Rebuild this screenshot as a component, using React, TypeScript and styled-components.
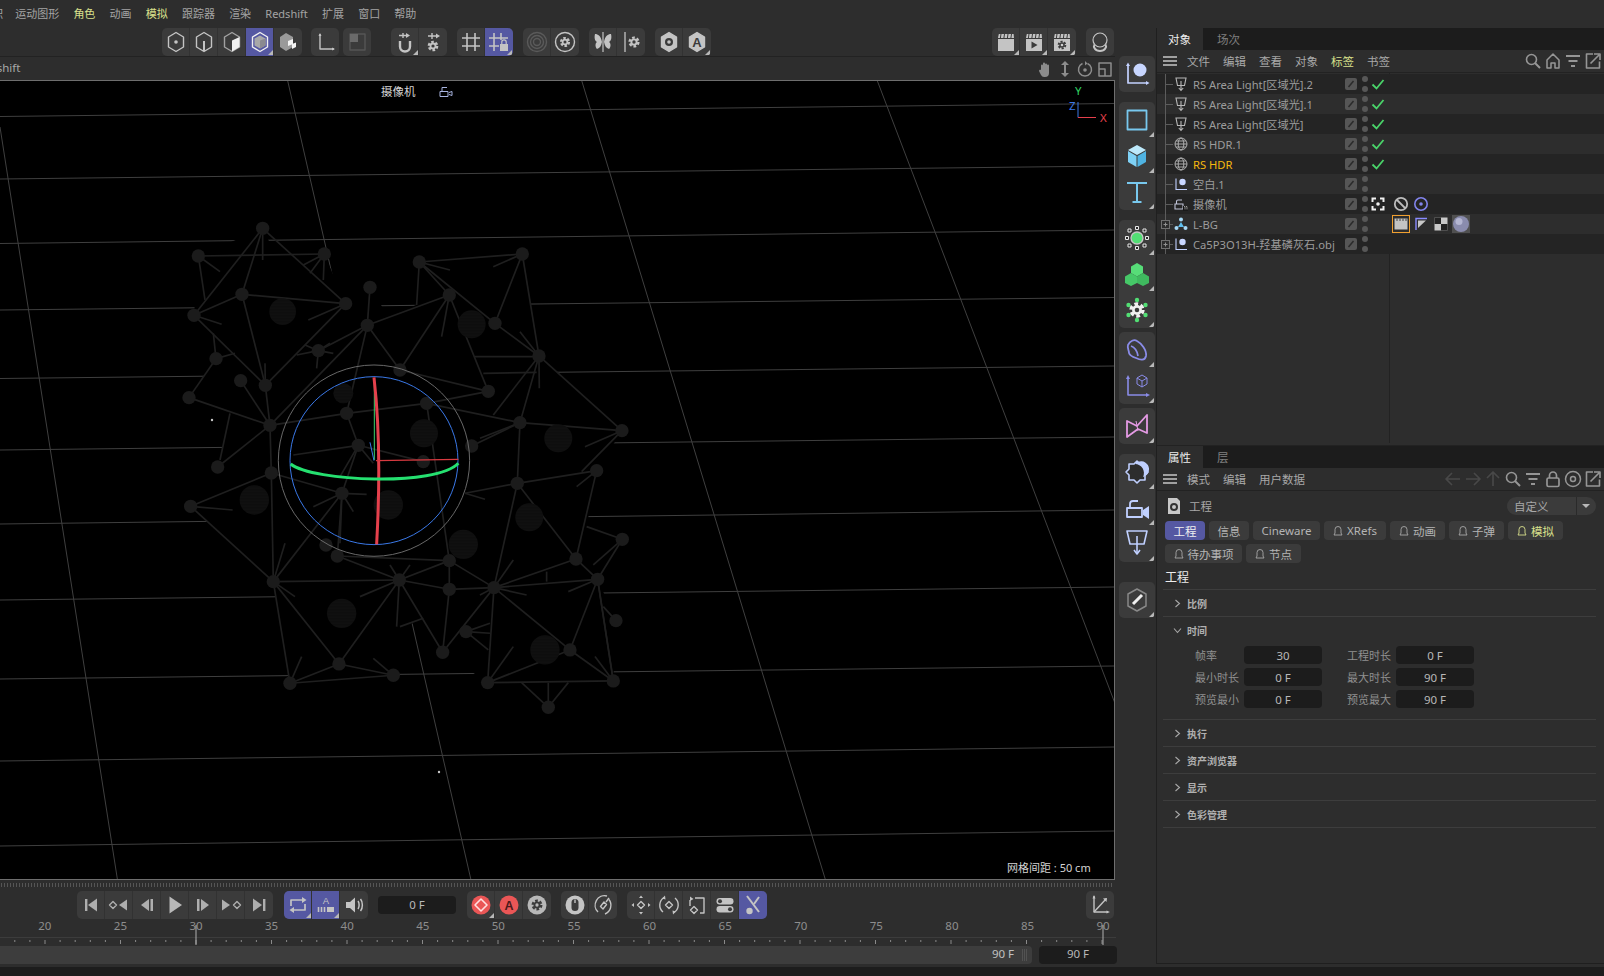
import * as React from 'react';
import styled, { createGlobalStyle } from 'styled-components';

const GlobalStyle = createGlobalStyle`
html, body {
    margin: 0;
    background: #2d2d2d;
    overflow: hidden;
}
* { box-sizing: border-box; }
`;

const Page = styled.div`
    width: 1604px;
    height: 976px;
    display: flex;
    flex-direction: column;
    background: #2d2d2d;
    color: #a8a8a8;
    font-family: "Noto Sans", "Noto Sans CJK SC", sans-serif;
    font-size: 11.5px;
    overflow: hidden;
`;

const MenuBar = styled.div`
    height: 28px;
    flex: none;
    display: flex;
    align-items: center;
    padding: 0 0 2px 16px;
    gap: 14.2px;
    font-size: 11px;
`;

const MenuItem = styled.span<{ $hot?: boolean }>`
    color: ${p => (p.$hot ? '#d9e08c' : '#a4a4a4')};
    white-space: nowrap;
`;

const ClippedItem = styled(MenuItem)`
    margin-left: -24px;
    margin-right: -2px;
`;

const Body = styled.div`
    flex: 1;
    min-height: 0;
    display: flex;
`;

const MainCol = styled.div`
    width: 1116px;
    flex: none;
    display: flex;
    flex-direction: column;
`;

const ToolRow = styled.div<{ $left: number }>`
    height: 28px;
    flex: none;
    display: flex;
    padding-left: ${p => p.$left}px;
    padding-right: 2px;
`;

const Group = styled.div<{ $gap?: number; $top?: number; $column?: boolean }>`
    display: flex;
    flex-direction: ${p => (p.$column ? 'column' : 'row')};
    margin-left: ${p => p.$gap ?? 0}px;
    margin-top: ${p => p.$top ?? 0}px;
    border-radius: 5px;
    overflow: hidden;
    flex: none;
    background: #3b3b3b;
`;

const Cell = styled.div<{ $active?: boolean; $corner?: boolean; $tone?: string; $size?: number }>`
    position: relative;
    width: ${p => p.$size ?? 28}px;
    height: ${p => p.$size ?? 28}px;
    display: flex;
    align-items: center;
    justify-content: center;
    background: ${p => (p.$active ? '#5558a2' : 'transparent')};
    color: ${p => p.$tone ?? '#c4c4c4'};
    & + & { box-shadow: -1px 0 0 #323232; }

    svg { display: block; width: 100%; height: 100%; }

    ${p => p.$corner && `
    &::after {
        content: '';
        position: absolute;
        right: 1px;
        bottom: 1px;
        border-style: solid;
        border-width: 0 0 5px 5px;
        border-color: transparent transparent #b8b8b8 transparent;
    }`}
`;

const ViewHeader = styled.div`
    height: 24px;
    flex: none;
    display: flex;
    align-items: center;
    border-top: 1px solid #222;
    margin-right: 1px;
`;

const ViewName = styled.span`
    margin-left: -24px;
    padding-bottom: 2px;
    color: #a8a8a8;
    flex: 1;
`;

const SmallIcon = styled.div`
    width: 20px;
    height: 20px;
    color: #8c8c8c;
    svg { display: block; width: 100%; height: 100%; }
`;

const Viewport = styled.div`
    position: relative;
    width: 1115px;
    height: 800px;
    flex: none;
    background: #000;
    border-top: 1px solid #6e6e6e;
    border-right: 1px solid #6e6e6e;
    border-bottom: 1px solid #6e6e6e;
    overflow: hidden;

    > svg { position: absolute; left: 0; top: -1px; width: 1114px; height: 800px; }
`;

const ViewLabel = styled.div<{ $x: number; $y: number; $color?: string; $small?: boolean }>`
    position: absolute;
    left: ${p => p.$x}px;
    top: ${p => p.$y}px;
    color: ${p => p.$color ?? '#d4d4d4'};
    font-size: ${p => (p.$small ? 11 : 11.5)}px;
    line-height: 14px;
    white-space: nowrap;
`;

const Handle = styled.div`
    height: 11px;
    flex: none;
    margin: 0 2px 0 0;
    padding-top: 3px;
    &::before {
        content: '';
        display: block;
        height: 4px;
        background-image: radial-gradient(circle, #555 0.6px, transparent 0.8px);
        background-size: 3px 2px;
    }
`;

const NumberField = styled.div<{ $w: number; $h?: number; $gap?: number }>`
    width: ${p => p.$w}px;
    height: ${p => p.$h ?? 18}px;
    flex: none;
    margin-left: ${p => p.$gap ?? 0}px;
    display: flex;
    align-items: center;
    justify-content: center;
    background: #1c1c1c;
    border-radius: 4px;
    color: #b8b8b8;
`;

const CenterField = styled(NumberField)`
    align-self: center;
    padding-bottom: 2px;
`;

const EndField = styled(NumberField)`
    padding-bottom: 4px;
`;

const Spacer = styled.div`
    flex: 1;
`;

const RulerLabels = styled.div`
    height: 18px;
    flex: none;
    display: flex;
    padding-left: 7px;
    overflow: hidden;
`;

const RulerLabel = styled.div`
    width: 75.6px;
    flex: none;
    text-align: center;
    color: #8e8e8e;
    font-size: 11.5px;
    line-height: 14px;
`;

const RulerTicks = styled.svg`
    display: block;
    width: 1116px;
    height: 9px;
    flex: none;
    overflow: visible;
`;

const RangeRow = styled.div`
    height: 18px;
    flex: none;
    display: flex;
`;

const RangeBar = styled.div`
    width: 1032px;
    flex: none;
    height: 18px;
    background: #3d3d3d;
    border-radius: 0 4px 4px 0;
    display: flex;
    align-items: center;
    justify-content: flex-end;
    padding: 0 18px 4px 0;
    color: #c0c0c0;
    position: relative;

    &::after {
        content: '';
        position: absolute;
        right: 4px;
        top: 3px;
        width: 6px;
        height: 12px;
        background: repeating-linear-gradient(90deg, #525252 0 1px, transparent 1px 2px);
    }
`;

const Strip = styled.div`
    width: 40px;
    flex: none;
    padding: 28px 1px 0 3px;
    display: flex;
    flex-direction: column;
    align-items: flex-start;
`;

const Side = styled.div`
    flex: 1;
    min-width: 0;
    height: 936px;
    display: flex;
    flex-direction: column;
    border-left: 1px solid #1f1f1f;
    border-bottom: 1px solid #1f1f1f;
`;

const StatusBar = styled.div`
    height: 9px;
    flex: none;
    background: #1d1d1d;
`;

const TabBar = styled.div`
    height: 22px;
    flex: none;
    display: flex;
    background: #1c1c1c;
`;

const Tab = styled.div<{ $on?: boolean }>`
    width: ${p => (p.$on ? '46px' : 'auto')};
    padding-left: ${p => (p.$on ? 11 : 14)}px;
    display: flex;
    align-items: center;
    background: ${p => (p.$on ? '#2d2d2d' : 'transparent')};
    color: ${p => (p.$on ? '#ececec' : '#808080')};
`;

const PanelMenu = styled.div`
    height: 23px;
    flex: none;
    display: flex;
    align-items: center;
    padding: 0 1px 0 6px;
    border-bottom: 1px solid #222;
    gap: 13px;
`;

const Burger = styled.div`
    width: 14px;
    height: 10px;
    margin-right: -3px;
    flex: none;
    border-top: 2px solid #a0a0a0;
    border-bottom: 2px solid #a0a0a0;
    position: relative;
    &::after {
        content: '';
        position: absolute;
        left: 0;
        right: 0;
        top: 2px;
        height: 2px;
        background: #a0a0a0;
    }
`;

const MenuIcons = styled.div`
    margin-left: auto;
    display: flex;
    align-items: center;
`;

const MenuIcon = styled.div<{ $dim?: boolean }>`
    width: 20px;
    height: 20px;
    color: ${p => (p.$dim ? '#484848' : '#969696')};
    svg { display: block; width: 100%; height: 100%; }
`;

const ObjectPanel = styled.div`
    height: 415px;
    flex: none;
    display: flex;
    flex-direction: column;
`;

const ObjectList = styled.div`
    flex: 1;
    display: flex;
    flex-direction: column;
    background: linear-gradient(90deg, transparent 232px, #222 232px, #222 233px, transparent 233px);
    padding-top: 1px;
`;

const Row = styled.div<{ $dark: boolean }>`
    height: 20px;
    flex: none;
    display: flex;
    background: ${p => (p.$dark ? '#242424' : '#2d2d2d')};
`;

const NameCell = styled.div`
    width: 232px;
    flex: none;
    display: flex;
    align-items: center;
`;

const TagCell = styled.div`
    flex: 1;
    display: flex;
    align-items: center;
    padding-left: 2px;
    margin-left: 1px;
    gap: 2px;
`;

const TreeGlyph = styled.svg`
    width: 16px;
    height: 20px;
    flex: none;
`;

const ObjIcon = styled.svg`
    width: 16px;
    height: 16px;
    flex: none;
    color: #b8b8b8;
`;

const ObjName = styled.span<{ $hot?: boolean }>`
    margin-left: 4px;
    font-size: 11.2px;
    color: ${p => (p.$hot ? '#f6b90f' : '#9c9c9c')};
    white-space: nowrap;
    flex: 1;
    overflow: hidden;
`;

const EditChip = styled.svg`
    width: 12px;
    height: 12px;
    flex: none;
`;

const VisDots = styled.div`
    width: 6px;
    height: 16px;
    margin-left: 5px;
    flex: none;
    display: flex;
    flex-direction: column;
    justify-content: space-between;
    &::before, &::after {
        content: '';
        width: 6px;
        height: 6px;
        border-radius: 50%;
        background: #575757;
    }
`;

const CheckSlot = styled.div`
    width: 20px;
    height: 16px;
    margin-left: 1px;
    padding-right: 2px;
    flex: none;
    display: flex;
    align-items: center;
    justify-content: center;
    svg { width: 14px; height: 14px; display: block; }
`;

const TagIcon = styled.svg<{ $framed?: boolean }>`
    width: 18px;
    height: 18px;
    flex: none;
    ${p => p.$framed && 'outline: 1px solid #f0a030; outline-offset: -1px;'}
`;

const AttrPanel = styled.div`
    flex: 1;
    display: flex;
    flex-direction: column;
    margin-top: 2px;
    border-top: 1px solid #222;
`;

const AttrHead = styled.div`
    height: 28px;
    flex: none;
    display: flex;
    align-items: center;
    padding: 2px 8px 0 9px;
`;

const DocIcon = styled.svg`
    width: 16px;
    height: 18px;
    flex: none;
`;

const AttrTitle = styled.span`
    margin-left: 7px;
`;

const PresetSelect = styled.div`
    margin-left: auto;
    width: 89px;
    height: 18px;
    border-radius: 9px;
    background: #3b3b3b;
    display: flex;
    align-items: center;
    padding-left: 7px;
    color: #a8a8a8;
    position: relative;
    &::after {
        content: '';
        position: absolute;
        right: 6px;
        top: 7px;
        border-style: solid;
        border-width: 4px 4px 0 4px;
        border-color: #b8b8b8 transparent transparent transparent;
    }
    &::before {
        content: '';
        position: absolute;
        right: 19px;
        top: 0;
        bottom: 0;
        width: 1px;
        background: #2a2a2a;
    }
`;

const PillRow = styled.div<{ $top: number }>`
    display: flex;
    gap: 4px;
    padding-left: 8px;
    margin-top: ${p => p.$top}px;
`;

const Pill = styled.div<{ $w: number; $on?: boolean; $hot?: boolean }>`
    width: ${p => p.$w}px;
    height: 19px;
    border-radius: 4px;
    flex: none;
    display: flex;
    align-items: center;
    justify-content: center;
    gap: 4px;
    background: ${p => (p.$on ? '#5558a2' : '#3b3b3b')};
    color: ${p => (p.$on ? '#f0f0f0' : p.$hot ? '#d9e08c' : '#b4b4b4')};
`;

const Bell = styled.svg`
    width: 10px;
    height: 11px;
    flex: none;
`;

const AttrHeading = styled.div`
    height: 26px;
    flex: none;
    display: flex;
    align-items: center;
    padding: 2px 0 0 8px;
    color: #ededed;
    font-size: 12px;
`;

const Section = styled.div`
    margin: 0 8px 0 6px;
    border-top: 1px solid #3d3d3d;
    &:last-of-type { border-bottom: 1px solid #3d3d3d; }
`;

const SectionHead = styled.div`
    height: 26px;
    display: flex;
    align-items: center;
    gap: 5px;
    padding-left: 10px;
    font-size: 10px;
    font-weight: 700;
    color: #b0b0b0;
`;

const Chevron = styled.svg`
    width: 9px;
    height: 9px;
    flex: none;
`;

const FieldGrid = styled.div`
    display: grid;
    grid-template-columns: 49px 78px 74px 78px;
    row-gap: 4px;
    padding: 3px 0 11px 32px;
    align-items: center;
    justify-content: start;
`;

const FieldLabel = styled.span<{ $second?: boolean }>`
    color: #909090;
    white-space: nowrap;
    font-size: 11px;
    margin-left: ${p => (p.$second ? 25 : 0)}px;
`;

const FieldValue = styled.div`
    height: 18px;
    display: flex;
    align-items: center;
    justify-content: center;
    background: #1c1c1c;
    border-radius: 4px;
    color: #b8b8b8;
    width: 78px;
`;

/* ---------- icon drawings ---------- */

const HEX = '14,4.5 21.5,9 21.5,19 14,23.5 6.5,19 6.5,9';

function Svg({ children, box = 28 }: { children: React.ReactNode; box?: number }) {
    return (
        <svg viewBox={`0 0 ${box} ${box}`} fill="none" stroke="currentColor" strokeWidth={1.4} strokeLinejoin="round">
            {children}
        </svg>
    );
}

function Gear({ x, y, r = 4, hole = '#3b3b3b', color = 'currentColor' }: { x: number; y: number; r?: number; hole?: string; color?: string }) {
    return (
        <g stroke="none">
            <circle cx={x} cy={y} r={r} fill="none" stroke={color} strokeWidth={r * 0.55} strokeDasharray={`${r * 0.62} ${r * 0.42}`} />
            <circle cx={x} cy={y} r={r * 0.82} fill={color} />
            <circle cx={x} cy={y} r={r * 0.38} fill={hole} />
        </g>
    );
}

const Clap = ({ children }: { children?: React.ReactNode }) => (
    <g>
        <path d="M6 10 L6.8 6 H21.6 L22 10 Z" fill="currentColor" stroke="none" />
        <path d="M9 6 L8.4 10 M12.5 6 L11.9 10 M16 6 L15.4 10 M19.5 6 L18.9 10" stroke="#3b3b3b" strokeWidth={1} />
        <rect x={6} y={11} width={16} height={12} fill="currentColor" stroke="none" />
        {children}
    </g>
);

const toolIcons: Record<string, React.ReactNode> = {
    hexDot: <><polygon points={HEX} /><circle cx={14} cy={14} r={1.8} fill="currentColor" stroke="none" /></>,
    hexStem: <><polygon points={HEX} /><path d="M14 23V13" strokeWidth={2} /></>,
    hexHalf: <><polygon points={HEX} opacity={0.75} /><polygon points="14,12.5 21.5,9 21.5,19 14,23.5" fill="#f0f0f0" stroke="none" /></>,
    hexCube: <><polygon points={HEX} stroke="#f0f0f0" /><polygon points="14,7.5 19.5,10.5 19.5,17.5 14,20.5 8.5,17.5 8.5,10.5" fill="#a8a8a8" stroke="none" /><polygon points="14,12.5 19.5,10.5 19.5,17.5 14,20.5" fill="#8a8a90" stroke="none" /></>,
    cubes: <><polygon points="12,5 19,9 19,19 12,23 6,19 6,9" fill="#9a9a9a" stroke="none" /><polygon points="14,13 19,11 19,16 14,18" fill="#f4f4f4" stroke="none" /><polygon points="18,16 22,14.5 22,19 18,21" fill="#f4f4f4" stroke="none" /></>,
    axis: <><path d="M9 6V21H23" /><path d="M7.5 8L9 5l1.5 3zM21 19.5l3 1.5-3 1.5z" fill="currentColor" stroke="none" /></>,
    dim: <><rect x={7} y={6} width={15} height={16} stroke="#565656" /><rect x={7} y={6} width={8} height={8} fill="#6a6a6a" stroke="none" /></>,
    magnet: <><path d="M9 13v5.5a5 5 0 0 0 10 0V13" strokeWidth={2.4} /><path d="M8 7.5h8" /><path d="M15 5l4 2.5-4 2.5z" fill="currentColor" stroke="none" /><path d="M12 5v5" /></>,
    gearArrow: <><path d="M9 8h9" /><path d="M17 5.5l4 2.5-4 2.5z" fill="currentColor" stroke="none" /><path d="M13 5v6" /><Gear x={14} y={18} r={4.2} /></>,
    grid: <path d="M10 5v18M18 5v18M5 10h18M5 18h18" strokeWidth={1.6} />,
    gridLock: <><path d="M9 5v18M16 5v7M4 10h19M4 18h10" strokeWidth={1.6} /><rect x={15} y={16} width={8} height={7} fill="currentColor" stroke="none" /><path d="M16.8 16v-2a2.2 2.2 0 0 1 4.4 0v2" strokeWidth={1.2} /></>,
    rings: <g stroke="#5a5a5a"><circle cx={14} cy={14} r={9.5} /><circle cx={14} cy={14} r={6.5} /><circle cx={14} cy={14} r={3.5} /></g>,
    gearRing: <><circle cx={14} cy={14} r={9.5} /><Gear x={14} y={14} r={4} /></>,
    wings: <><path d="M13 14C12 8 9 6 6 6c-1 4 0 7 2 8-2 1-2 5 0 7 3-1 4-3 5-7z" fill="currentColor" stroke="none" /><path d="M15 14c1-6 4-8 7-8 1 4 0 7-2 8 2 1 2 5 0 7-3-1-4-3-5-7z" stroke="none" fill="currentColor" /><path d="M14 4v20" strokeWidth={1.2} /></>,
    lineGear: <><path d="M8 4v20" strokeWidth={1.3} /><Gear x={17} y={14} r={4.4} /></>,
    hexEye: <><polygon points={HEX} fill="currentColor" /><circle cx={14} cy={14} r={4} fill="#3b3b3b" stroke="none" /><circle cx={14} cy={14} r={1.8} fill="currentColor" stroke="none" /></>,
    hexA: <><polygon points={HEX} fill="currentColor" /><text x={14} y={18.6} textAnchor="middle" fontSize={13} fontWeight={700} fill="#3b3b3b" stroke="none" fontFamily="Liberation Sans">A</text></>,
    clap: <Clap />,
    clapPlay: <Clap><path d="M11.5 13.5l6 3.5-6 3.5z" fill="#3b3b3b" stroke="none" /></Clap>,
    clapGear: <Clap><Gear x={14} y={17} r={3.4} hole="#cfcfcf" color="#3b3b3b" /></Clap>,
    sphereRing: <><circle cx={14} cy={12} r={7} strokeWidth={1.2} /><path d="M8.5 16.5C7 19 9 23 14 23s7-4 5.500-6.500" strokeWidth={2} /></>,
    first: <><rect x={8} y={8} width={2.4} height={12} fill="currentColor" stroke="none" /><path d="M20 7.500v13l-9-6.500z" fill="currentColor" stroke="none" /></>,
    prevKey: <><path d="M4.500 14l3.500-3.500 3.500 3.500-3.500 3.500z" /><path d="M22 8.500v11l-8-5.500z" fill="currentColor" stroke="none" /></>,
    prevFrame: <><path d="M16 8v12l-8-6z" fill="currentColor" stroke="none" /><rect x={17.500} y={8} width={2.500} height={12} fill="currentColor" stroke="none" /></>,
    play: <path d="M8.500 5.500v17L21 14z" fill="currentColor" stroke="none" />,
    nextFrame: <><rect x={8} y={8} width={2.500} height={12} fill="currentColor" stroke="none" /><path d="M12 8v12l8-6z" fill="currentColor" stroke="none" /></>,
    nextKey: <><path d="M5 8.500v11l8-5.500z" fill="currentColor" stroke="none" /><path d="M16.500 14l3.500-3.500 3.500 3.500-3.500 3.500z" /></>,
    last: <><path d="M8 7.500v13l9-6.500z" fill="currentColor" stroke="none" /><rect x={18} y={8} width={2.400} height={12} fill="currentColor" stroke="none" /></>,
    loop: <><path d="M7 15v-6h13" strokeWidth={1.7} /><path d="M18 6l4.500 3-4.500 3z" fill="currentColor" stroke="none" /><path d="M21 13v6H8" strokeWidth={1.7} /><path d="M10 16l-4.500 3 4.500 3z" fill="currentColor" stroke="none" /></>,
    autoBars: <><text x={14} y={12.500} textAnchor="middle" fontSize={9.500} fill="currentColor" stroke="none" fontFamily="Liberation Sans">A</text><path d="M6.500 16v5M9.500 16v5M12.500 16v5" strokeWidth={1.6} /><rect x={15} y={16} width={7} height={5} fill="currentColor" stroke="none" /></>,
    speaker: <><path d="M6 11h4l5-4.500v15L10 17H6z" fill="currentColor" stroke="none" /><path d="M18 10c1.500 2 1.500 6 0 8M20.500 8c2.500 3 2.500 9 0 12" strokeWidth={1.500} /></>,
    keyRed: <><circle cx={14} cy={14} r={9.500} fill="#ea5656" stroke="none" /><path d="M14 8l6 6-6 6-6-6z" stroke="#ffdede" strokeWidth={1.600} /></>,
    autoRed: <><circle cx={14} cy={14} r={9.500} fill="#ea5656" stroke="none" /><text x={14} y={18.500} textAnchor="middle" fontSize={12.500} fontWeight={700} fill="#4a1a1a" stroke="none" fontFamily="Liberation Sans">A</text></>,
    gearDisc: <><circle cx={14} cy={14} r={9.500} fill="#b8b8b8" stroke="none" /><Gear x={14} y={14} r={4.300} color="#3b3b3b" hole="#b8b8b8" /></>,
    mouseDisc: <><circle cx={14} cy={14} r={9.500} fill="#c4c4c4" stroke="none" /><rect x={10.500} y={8} width={7} height={12} rx={3.500} fill="#3b3b3b" stroke="none" /><path d="M14 8.500v3.500" stroke="#c4c4c4" /></>,
    gauge: <><path d="M9 21a9.500 9.500 0 0 1 9-16M20 8.500A9.500 9.500 0 0 1 16 23" /><path d="M15 11l2.500 2.500L14 18l-2.500-2.500z" /><path d="M17 11l3-4" /></>,
    moveKey: <><path d="M14 10.500l3.500 3.500-3.500 3.500-3.500-3.500z" /><path d="M14 4.500l2 2.500h-4zM14 23.500L12 21h4zM4.500 14L7 12v4zM23.500 14L21 16v-4z" fill="currentColor" stroke="none" /></>,
    rotateKey: <><path d="M14 10.500l3.500 3.500-3.500 3.500-3.500-3.500z" /><path d="M8 21a9 9 0 0 1 1-14.500M20 7a9 9 0 0 1-1 14.500" /><path d="M10 4.500l.5 4-3.500-1zM18 23.500l-.5-4 3.500 1z" fill="currentColor" stroke="none" /></>,
    scaleKey: <><path d="M12 7h9v15h-4" /><path d="M7 15V9" /><path d="M11 15.500l3.500 3.500-3.500 3.500L7.500 19z" /><path d="M7 5.500l3.500 2.500L7 10z" fill="currentColor" stroke="none" /></>,
    toggles: <><rect x={5.500} y={7} width={17} height={6.500} rx={3.250} fill="currentColor" stroke="none" /><rect x={5.500} y={15} width={17} height={6.500} rx={3.250} fill="currentColor" stroke="none" /><circle cx={9} cy={10.250} r={2} fill="#3b3b3b" stroke="none" /><circle cx={19} cy={18.250} r={2} fill="#3b3b3b" stroke="none" /></>,
    cutKey: <><path d="M8 5l12 16" strokeWidth={2} /><path d="M20 6L15 13" strokeWidth={2} /><circle cx={10.500} cy={20} r={3.200} fill="currentColor" stroke="none" /></>,
    param: <><path d="M8 5v16h14" /><path d="M8 21L20 8" /><path d="M6.500 7.500L8 4l1.500 3.500zM20.500 19.500L24 21l-3.500 1.500zM17 7.500L21 7l-.5 4z" fill="currentColor" stroke="none" /></>,
};

const stripIcons: Record<string, React.ReactNode> = {
    nullObj: <g stroke="#c4d2ff" strokeWidth={1.700}><path d="M9 8v19h20" /><path d="M7 10l2-3.500 2 3.500zM27 25l3.500 2-3.500 2z" fill="#c4d2ff" stroke="none" /><circle cx={21} cy={14} r={6.500} fill="#c8d6ff" stroke="none" /></g>,
    rect: <rect x={8.500} y={8.500} width={19} height={19} stroke="#78c8ee" strokeWidth={1.800} />,
    cube: <g stroke="none"><polygon points="18,7 27,12 18,17 9,12" fill="#bde9fb" /><polygon points="9,13 17.500,18 17.500,29 9,24" fill="#7fd2f6" /><polygon points="27,13 18.500,18 18.500,29 27,24" fill="#4fb3e2" /></g>,
    text: <path d="M8 9h20M18 9v19M13.500 28h9" stroke="#78c8ee" strokeWidth={2} />,
    nodeGreen: <g><circle cx={18} cy={18} r={6} fill="#52df74" /><g fill="#2a2a2a" stroke="#e8e8e8" strokeWidth={1}><rect x={16.500} y={6.500} width={3} height={3} /><rect x={16.500} y={26.500} width={3} height={3} /><rect x={6.500} y={16.500} width={3} height={3} /><rect x={26.500} y={16.500} width={3} height={3} /><rect x={9} y={9} width={3} height={3} /><rect x={24} y={9} width={3} height={3} /><rect x={9} y={24} width={3} height={3} /><rect x={24} y={24} width={3} height={3} /></g></g>,
    cubesGreen: <g stroke="none"><polygon points="18,7 24,10.500 24,17 18,20.500 12,17 12,10.500" fill="#57dd78" /><polygon points="12,17 18,20.500 18,27 12,30 6,27 6,20.500" fill="#46c868" /><polygon points="24,17 30,20.500 30,27 24,30 18,27 18,20.500" fill="#3fb95f" /></g>,
    gearGreen: <g><g fill="#52df74" stroke="none"><circle cx={18} cy={8} r={2.200} /><circle cx={18} cy={28} r={2.200} /><circle cx={9.500} cy={13} r={2.200} /><circle cx={26.500} cy={13} r={2.200} /><circle cx={9.500} cy={23} r={2.200} /><circle cx={26.500} cy={23} r={2.200} /></g><Gear x={18} y={18} r={6} color="#f0f0f0" /></g>,
    spline: <path d="M9 13c2-4 6-6 9-4 4 2 10 9 9 15-1 5-6 4-10 2-3-1-6-2-7-5 0-3-2-5-1-8zM12 14c3 1 6 4 7 10" stroke="#8a8ce8" strokeWidth={1.800} />,
    axisCube: <g stroke="#8a8ce8" strokeWidth={1.600}><path d="M9 9v18h20" /><path d="M7 11l2-4 2 4zM27 25l4 2-4 2z" fill="#8a8ce8" stroke="none" /><path d="M23 7l5 3v6l-5 3-5-3v-6zM18 10l5 3 5-3M23 13v6" strokeWidth={1} /></g>,
    bow: <g stroke="#e49ae4" strokeWidth={1.800}><path d="M8 13l10 5 10-11v18l-9-4-11 8z" /><path d="M17 13l2 10" strokeWidth={1} /></g>,
    moon: <g><path d="M18 7l3 3h5v5l3 3-3 3v5h-5l-3 3-3-3h-5v-5l-3-3 3-3v-5h5z" stroke="#c0d0ff" strokeWidth={1.600} fill="#2d2d2d" /><path d="M16 10a8 8 0 1 1 8 13 9 9 0 0 0-8-13z" fill="#c0d0ff" stroke="none" /></g>,
    camera: <g stroke="#c0d0ff" strokeWidth={1.800}><path d="M8 27v-9h15v9zM11 18v-4a3 3 0 0 1 3-3h5" /><path d="M24 20l6-4v13l-6-4z" fill="#c0d0ff" stroke="none" /></g>,
    lamp: <g stroke="#c0d0ff" strokeWidth={1.600}><path d="M8 5h20l-3 13H11zM18 10v17" /><path d="M15 24l3 4 3-4" /></g>,
    pen: <g><polygon points="18,7 27,12 27,24 18,29 9,24 9,12" stroke="#888" strokeWidth={1.500} /><path d="M14 22l9-9" stroke="#f0f0f0" strokeWidth={3} /></g>,
};

const searchIcon = <Svg box={20}><circle cx={8.500} cy={8.500} r={5} strokeWidth={1.600} /><path d="M12 12l5 5" strokeWidth={2} /></Svg>;
const externalIcon = <Svg box={20}><path d="M10 3H3.500v14h13v-6.500" strokeWidth={1.600} /><path d="M7.500 12.500L16 4M11 3h6v6" strokeWidth={1.600} /></Svg>;
const filterIcon = <Svg box={20}><path d="M3 5h14M5.500 10h9M8 15h4" strokeWidth={2} /></Svg>;

function Tool({ n, active, corner, tone, size, box }: { n: string; active?: boolean; corner?: boolean; tone?: string; size?: number; box?: number }) {
    return (
        <Cell $active={active} $corner={corner} $tone={tone} $size={size}>
            <Svg box={box}>{box === 36 ? stripIcons[n] : toolIcons[n]}</Svg>
        </Cell>
    );
}

function Ico({ kind }: { kind: string }) {
    if (kind === 'light') {
        return (
            <ObjIcon viewBox="0 0 16 16" fill="none" stroke="currentColor" strokeWidth={1.100}>
                <path d="M3 2h10l-1.500 7.500h-7zM8 5v9M5.800 12L8 14.500 10.200 12" />
            </ObjIcon>
        );
    }
    if (kind === 'globe') {
        return (
            <ObjIcon viewBox="0 0 16 16" fill="none" stroke="currentColor" strokeWidth={0.900}>
                <circle cx={8} cy={8} r={6} />
                <ellipse cx={8} cy={8} rx={2.800} ry={6} />
                <path d="M2 8h12M3 5h10M3 11h10" />
            </ObjIcon>
        );
    }
    if (kind === 'null') {
        return (
            <ObjIcon viewBox="0 0 16 16" fill="none" stroke="#c0d0ff" strokeWidth={1.100}>
                <path d="M3 2.500V13.500H14" />
                <circle cx={9.500} cy={6} r={3.200} fill="#c8d6ff" stroke="none" />
            </ObjIcon>
        );
    }
    if (kind === 'camera') {
        return (
            <ObjIcon viewBox="0 0 16 16" fill="none" stroke="#c0c4d8" strokeWidth={1.100}>
                <path d="M2 13V8h8v5zM3.500 8V5.500a1.500 1.500 0 0 1 1.500-1.500h4" />
                <rect x={10} y={10} width={5} height={4.500} fill="#111" stroke="none" />
                <path d="M11 10.500h1v3M13 10.500h1v3" stroke="#ccc" strokeWidth={0.700} />
            </ObjIcon>
        );
    }
    return (
        <ObjIcon viewBox="0 0 16 16" stroke="none">
            <circle cx={8} cy={3.500} r={2} fill="#a8d8f5" />
            <polygon points="8,6 11,11 5,11" fill="#5fc0f0" />
            <circle cx={3.500} cy={12} r={2} fill="#a8d8f5" />
            <circle cx={12.500} cy={12} r={2} fill="#a8d8f5" />
        </ObjIcon>
    );
}

function Tree({ plus }: { plus?: boolean }) {
    return (
        <TreeGlyph viewBox="0 0 16 20" fill="none" stroke="#5c5c5c" strokeWidth={1}>
            <path d="M8.500 0V20" />
            <path d="M8.500 10.500H16" />
            {plus && (
                <g>
                    <rect x={4.500} y={6.500} width={8} height={8} fill="#2d2d2d" stroke="#707070" />
                    <path d="M6.500 10.500h4M8.500 8.500v4" stroke="#909090" />
                </g>
            )}
        </TreeGlyph>
    );
}

const ChevronIcon = ({ open }: { open?: boolean }) => (
    <Chevron viewBox="0 0 9 9" fill="none" stroke="#a8a8a8" strokeWidth={1.100}>
        <path d={open ? 'M1 2.500l3.500 4 3.500-4' : 'M2.500 1l4 3.500-4 3.500'} />
    </Chevron>
);

const BellIcon = ({ color = '#a8a8a8' }: { color?: string }) => (
    <Bell viewBox="0 0 10 11" fill="none" stroke={color} strokeWidth={0.900}>
        <path d="M1 10h8L8 8V4.500a3 3 0 0 0-6 0V8z" />
    </Bell>
);

/* ---------- data ---------- */

const menus = ['运动图形', '角色', '动画', '模拟', '跟踪器', '渲染', 'Redshift', '扩展', '窗口', '帮助'];

const objects = [
    { icon: 'light', name: 'RS Area Light[区域光].2', check: true },
    { icon: 'light', name: 'RS Area Light[区域光].1', check: true },
    { icon: 'light', name: 'RS Area Light[区域光]', check: true },
    { icon: 'globe', name: 'RS HDR.1', check: true },
    { icon: 'globe', name: 'RS HDR', check: true, hot: true },
    { icon: 'null', name: '空白.1' },
    { icon: 'camera', name: '摄像机', focus: true, tags: 'camera' },
    { icon: 'lbg', name: 'L-BG', plus: true, tags: 'bg' },
    { icon: 'null', name: 'Ca5P3O13H-羟基磷灰石.obj', plus: true },
];

/* traced off the viewport: grid in screen px, molecule in a 3x space around (170,210) */
const gridLines = [
    [0, 116.5, 1114, 103.5], [0, 179, 1114, 166], [0, 243.5, 1114, 230], [0, 310, 1114, 297.5],
    [0, 378.5, 1114, 366], [0, 450, 1114, 437], [0, 524, 1114, 510], [0, 600, 1114, 587],
    [0, 679, 1114, 666], [0, 761, 1114, 747], [0, 846, 1114, 831],
    [0, 127, 117.5, 880], [287.5, 80, 471, 880], [581.5, 80, 825.5, 880], [877, 80, 1116, 706],
];

const hull = '278,55 300,100 440,100 463,132 527,281 600,232 655,320 738,285 748,156 1057,132 1107,438 1356,662 1280,782 1250,950 1357,988 1283,1108 1338,1232 1330,1413 953,1418 818,1327 730,1240 690,1250 670,1396 360,1420 310,1115 62,889 143,771 180,610 57,563 138,446 72,316 85,138';

const nodes: Record<string, [number, number]> = {
    a: [278, 55], b: [85, 138], c: [463, 132], d: [216, 253], e: [527, 281], f: [72, 316], g: [138, 446], h: [212, 512],
    i: [286, 526], j: [57, 563], k: [300, 646], l: [143, 771], m: [304, 789], n: [62, 889], o: [310, 1115], p: [360, 1420],
    q: [507, 1362], r: [670, 1396], s: [600, 232], t: [592, 346], u: [445, 422], v: [530, 610], w: [565, 706], x: [516, 850],
    y: [748, 156], z: [838, 255], A: [1057, 132], B: [975, 340], C: [1107, 438], D: [955, 544], E: [770, 580], F: [905, 708],
    G: [760, 755], H: [690, 480], I: [1050, 638], J: [1356, 662], K: [1042, 820], L: [1280, 782], M: [1357, 988], N: [1218, 1047],
    O: [1283, 1108], P: [972, 1133], Q: [838, 1052], R: [838, 1138], S: [688, 1110], T: [818, 1327], U: [888, 1265], V: [953, 1418],
    W: [1200, 1320], X: [1330, 1413], Y: [1338, 1232], Z: [1135, 1492], aa: [468, 1005], ab: [502, 1038],
};

const bonds = 'a-f a-e a-d b-c d-e d-f d-i f-i e-i g-j h-k i-k j-k k-v k-t k-l k-m m-n m-o m-x n-o o-p o-q o-S o-x p-q p-r q-r q-S s-t t-u t-v t-z t-H v-w v-E x-w x-ab y-A y-B A-B A-C B-C C-I C-J H-D z-H z-D y-z D-E E-I E-Q I-J I-K K-L K-N K-P L-N M-O N-P N-O O-W O-X O-P P-Q P-V P-W P-T P-R Q-S Q-R Q-ab R-S R-T S-T S-ab V-W V-X W-X X-O I-F w-G'.split(' ');

const stubs = [
    [278, 55, 278, 150], [85, 138, 105, 270], [85, 138, 150, 185], [463, 132, 420, 190], [463, 132, 460, 210], [463, 132, 400, 165],
    [527, 281, 415, 330], [72, 316, 155, 343], [138, 446, 130, 370], [138, 446, 195, 430], [286, 526, 285, 460], [180, 610, 150, 750],
    [62, 889, 188, 900], [310, 1115, 345, 1000], [310, 1115, 375, 1160], [360, 1420, 395, 1340], [670, 1396, 610, 1345],
    [445, 422, 380, 435], [445, 422, 490, 430], [445, 422, 440, 475], [445, 422, 405, 405], [445, 422, 480, 400],
    [565, 706, 370, 735], [565, 706, 510, 800], [565, 706, 610, 760], [516, 850, 590, 853], [516, 850, 430, 890], [516, 850, 550, 905], [516, 850, 510, 1000],
    [748, 156, 840, 180], [748, 156, 740, 285], [838, 255, 815, 380], [1057, 132, 970, 170], [1107, 438, 1108, 535], [1107, 438, 1050, 365],
    [1107, 438, 970, 615], [915, 440, 1090, 440], [940, 490, 1100, 487], [1050, 638, 930, 685], [1356, 662, 1245, 710], [1356, 662, 1235, 785],
    [1042, 820, 885, 850], [885, 850, 945, 868], [1280, 782, 1220, 830], [1357, 988, 1250, 950], [1357, 988, 1270, 1065], [1283, 1108, 1195, 1145],
    [972, 1133, 1030, 1050], [972, 1133, 930, 1155], [972, 1133, 1070, 1155], [688, 1110, 680, 1250], [688, 1110, 570, 1160], [688, 1110, 720, 1065],
    [688, 1110, 660, 1065], [888, 1265, 960, 1240], [888, 1265, 960, 1270], [888, 1265, 955, 1320], [953, 1418, 1030, 1310], [1330, 1413, 1275, 1340],
    [1135, 1492, 1055, 1418], [1135, 1492, 1195, 1418], [1135, 1492, 1135, 1418], [1338, 1232, 1300, 1190], [690, 1250, 760, 1225], [1130, 1085, 1130, 1115],
];

const balls = [
    [338, 305, 40], [905, 343, 42], [762, 670, 42], [1165, 685, 42], [253, 870, 44], [655, 885, 44],
    [880, 1003, 44], [1078, 922, 42], [515, 1210, 44], [1125, 1320, 44], [520, 550, 30],
];

function Molecule() {
    return (
        <g transform="translate(170 130) scale(0.3333)">
            <defs>
                <pattern id="ballDots" width={4.5} height={4.5} patternUnits="userSpaceOnUse">
                    <rect width={4.5} height={4.5} fill="#0a0a0a" />
                    <circle cx={2.250} cy={2.250} r={1.400} fill="#1d1d1d" />
                </pattern>
            </defs>
            <polygon points={hull} fill="#000" />
            <g stroke="#1f1f1f" strokeWidth={5}>
                {bonds.map(b => {
                    const [p1, p2] = b.split('-');
                    const s = nodes[p1];
                    const t = nodes[p2];
                    return <line key={b} x1={s[0]} y1={s[1]} x2={t[0]} y2={t[1]} />;
                })}
                {stubs.map((s, i) => <line key={i} x1={s[0]} y1={s[1]} x2={s[2]} y2={s[3]} />)}
            </g>
            {balls.map((b, i) => <circle key={i} cx={b[0]} cy={b[1]} r={b[2]} fill="url(#ballDots)" />)}
            {Object.entries(nodes).map(([k, v]) => <circle key={k} cx={v[0]} cy={v[1]} r={20} fill="#1b1b1b" />)}
            <circle cx={612} cy={752} r={287} fill="none" stroke="#686868" strokeWidth={3} />
            <circle cx={612} cy={752} r={252} fill="none" stroke="#3a78e8" strokeWidth={3} />
            <line x1={613} y1={505} x2={613} y2={750} stroke="#3ad66c" strokeWidth={3} />
            <path d="M600 697L612 752" stroke="#3a78e8" strokeWidth={3} fill="none" />
            <path d="M612 502C628 640 630 820 620 1003" fill="none" stroke="#e5404c" strokeWidth={9} />
            <path d="M618 752L865 748" stroke="#d83a40" strokeWidth={4} />
            <path d="M362 762C430 815 800 830 865 760" fill="none" stroke="#25e070" strokeWidth={9} />
        </g>
    );
}

function Scene() {
    return (
        <svg viewBox="0 80 1114 800" fill="none">
            <g stroke="#3f3f3f" strokeWidth={1}>
                {gridLines.map((l, i) => <line key={i} x1={l[0]} y1={l[1]} x2={l[2]} y2={l[3]} />)}
            </g>
            <g transform="translate(0 80)">
                <Molecule />
            </g>
            <circle cx={212} cy={420} r={1.200} fill="#c8c8c8" />
            <circle cx={439} cy={772} r={1.200} fill="#c8c8c8" />
            <path d="M1078 117.500V102" stroke="#3a78e8" />
            <path d="M1078 117.500H1096" stroke="#e5404c" />
            <path d="M447 87.500h-5v3.500M440 96.500v-5h8v5zM449 92.500l3-1v4l-3-1" stroke="#a8b4e0" strokeWidth={1} />
        </svg>
    );
}

function Ruler() {
    const ticks = [];
    for (let f = 17; f <= 93; f++) {
        const x = 45 + (f - 20) * 15.1;
        if (x < 0 || x > 1112) continue;
        ticks.push(<line key={f} x1={x} x2={x} y1={3} y2={f % 5 === 0 ? 7 : 5} stroke="#8a8a8a" />);
    }
    return (
        <RulerTicks viewBox="0 0 1116 9">
            <line x1={0} x2={1116} y1={0.5} y2={0.5} stroke="#3c3c3c" />
            {ticks}
            <line x1={196} x2={196} y1={-12} y2={8} stroke="#b0b0b0" />
            <line x1={1103} x2={1103} y1={-12} y2={8} stroke="#b0b0b0" />
        </RulerTicks>
    );
}

export default function App() {
    return (
        <Page>
            <GlobalStyle />
            <MenuBar>
                <ClippedItem>积</ClippedItem>
                {menus.map(m => (
                    <MenuItem key={m} $hot={m === '角色' || m === '模拟'}>{m}</MenuItem>
                ))}
            </MenuBar>
            <Body>
                <MainCol>
                    <ToolRow $left={162}>
                        <Group>
                            <Tool n="hexDot" />
                            <Tool n="hexStem" />
                            <Tool n="hexHalf" />
                            <Tool n="hexCube" active corner />
                            <Tool n="cubes" />
                        </Group>
                        <Group $gap={9}><Tool n="axis" /></Group>
                        <Group $gap={4}><Tool n="dim" /></Group>
                        <Group $gap={20}>
                            <Tool n="magnet" corner />
                            <Tool n="gearArrow" />
                        </Group>
                        <Group $gap={10}>
                            <Tool n="grid" />
                            <Tool n="gridLock" active corner />
                        </Group>
                        <Group $gap={10}>
                            <Tool n="rings" />
                            <Tool n="gearRing" />
                        </Group>
                        <Group $gap={10}>
                            <Tool n="wings" />
                            <Tool n="lineGear" />
                        </Group>
                        <Group $gap={10}>
                            <Tool n="hexEye" />
                            <Tool n="hexA" corner />
                        </Group>
                        <Spacer />
                        <Group>
                            <Tool n="clap" corner />
                            <Tool n="clapPlay" corner />
                            <Tool n="clapGear" corner />
                        </Group>
                        <Group $gap={10}><Tool n="sphereRing" /></Group>
                    </ToolRow>
                    <ViewHeader>
                        <ViewName>Redshift</ViewName>
                        <SmallIcon>
                            <Svg box={20}><path d="M6 10V6.500a1 1 0 0 1 2 0V4.500a1 1 0 0 1 2 0v1a1 1 0 0 1 2 0v1a1 1 0 0 1 2 0V14a4 4 0 0 1-4 4H9a4 4 0 0 1-3-2l-2-4c0-1.500 1.500-1.500 2-1z" fill="currentColor" stroke="none" /></Svg>
                        </SmallIcon>
                        <SmallIcon>
                            <Svg box={20}><path d="M10 2l4 4h-3v8h3l-4 4-4-4h3V6H6z" fill="currentColor" stroke="none" /></Svg>
                        </SmallIcon>
                        <SmallIcon>
                            <Svg box={20}><path d="M12.500 4.500a6.500 6.500 0 1 1-5 0" strokeWidth={1.500} /><circle cx={10} cy={11} r={1.800} fill="currentColor" stroke="none" /><path d="M10 2l2.500 2.500L10 6.500z" fill="currentColor" stroke="none" /></Svg>
                        </SmallIcon>
                        <SmallIcon>
                            <Svg box={20}><rect x={4} y={4} width={12} height={13} strokeWidth={1.500} /><path d="M4 10h6v7" strokeWidth={1.500} /></Svg>
                        </SmallIcon>
                    </ViewHeader>
                    <Viewport>
                        <Scene />
                        <ViewLabel $x={381} $y={4}>摄像机</ViewLabel>
                        <ViewLabel $x={1075} $y={3} $color="#2fd060">Y</ViewLabel>
                        <ViewLabel $x={1069} $y={18} $color="#3a78e8">Z</ViewLabel>
                        <ViewLabel $x={1100} $y={30} $color="#e5404c">X</ViewLabel>
                        <ViewLabel $x={1007} $y={780} $small>网格间距 : 50 cm</ViewLabel>
                    </Viewport>
                    <Handle />
                    <ToolRow $left={77}>
                        <Group>
                            <Tool n="first" tone="#aeaeae" />
                            <Tool n="prevKey" tone="#aeaeae" />
                            <Tool n="prevFrame" tone="#aeaeae" />
                            <Tool n="play" tone="#b8b8b8" />
                            <Tool n="nextFrame" tone="#aeaeae" />
                            <Tool n="nextKey" tone="#aeaeae" />
                            <Tool n="last" tone="#aeaeae" />
                        </Group>
                        <Group $gap={11}>
                            <Tool n="loop" active corner />
                            <Tool n="autoBars" active corner />
                            <Tool n="speaker" />
                        </Group>
                        <CenterField $w={78} $gap={10}>0 F</CenterField>
                        <Group $gap={11}>
                            <Tool n="keyRed" corner />
                            <Tool n="autoRed" />
                            <Tool n="gearDisc" />
                        </Group>
                        <Group $gap={10}>
                            <Tool n="mouseDisc" />
                            <Tool n="gauge" />
                        </Group>
                        <Group $gap={10}>
                            <Tool n="moveKey" />
                            <Tool n="rotateKey" />
                            <Tool n="scaleKey" />
                            <Tool n="toggles" />
                            <Tool n="cutKey" active />
                        </Group>
                        <Spacer />
                        <Group><Tool n="param" /></Group>
                    </ToolRow>
                    <RulerLabels>
                        {[20, 25, 30, 35, 40, 45, 50, 55, 60, 65, 70, 75, 80, 85, 90].map(n => (
                            <RulerLabel key={n}>{n}</RulerLabel>
                        ))}
                    </RulerLabels>
                    <Ruler />
                    <RangeRow>
                        <RangeBar>90 F</RangeBar>
                        <EndField $w={78} $gap={7}>90 F</EndField>
                    </RangeRow>
                </MainCol>
                <Strip>
                    <Group><Tool n="nullObj" size={36} box={36} /></Group>
                    <Group $column $top={10}>
                        <Tool n="rect" size={36} box={36} corner />
                        <Tool n="cube" size={36} box={36} corner />
                        <Tool n="text" size={36} box={36} corner />
                    </Group>
                    <Group $column $top={10}>
                        <Tool n="nodeGreen" size={36} box={36} corner />
                        <Tool n="cubesGreen" size={36} box={36} corner />
                        <Tool n="gearGreen" size={36} box={36} corner />
                    </Group>
                    <Group $column $top={4}>
                        <Tool n="spline" size={36} box={36} corner />
                        <Tool n="axisCube" size={36} box={36} corner />
                    </Group>
                    <Group $top={4}><Tool n="bow" size={36} box={36} corner /></Group>
                    <Group $column $top={10}>
                        <Tool n="moon" size={36} box={36} corner />
                        <Tool n="camera" size={36} box={36} corner />
                        <Tool n="lamp" size={36} box={36} corner />
                    </Group>
                    <Group $top={20}><Tool n="pen" size={36} box={36} corner /></Group>
                </Strip>
                <Side>
                    <ObjectPanel>
                        <TabBar>
                            <Tab $on>对象</Tab>
                            <Tab>场次</Tab>
                        </TabBar>
                        <PanelMenu>
                            <Burger />
                            <span>文件</span>
                            <span>编辑</span>
                            <span>查看</span>
                            <span>对象</span>
                            <MenuItem $hot>标签</MenuItem>
                            <span>书签</span>
                            <MenuIcons>
                                <MenuIcon>{searchIcon}</MenuIcon>
                                <MenuIcon><Svg box={20}><path d="M4 17V9l6-6 6 6v8h-4v-5H8v5z" strokeWidth={1.500} /></Svg></MenuIcon>
                                <MenuIcon>{filterIcon}</MenuIcon>
                                <MenuIcon>{externalIcon}</MenuIcon>
                            </MenuIcons>
                        </PanelMenu>
                        <ObjectList>
                            {objects.map((o, i) => (
                                <Row key={o.name} $dark={i % 2 === 0}>
                                    <NameCell>
                                        <Tree plus={o.plus} />
                                        <Ico kind={o.icon} />
                                        <ObjName $hot={o.hot}>{o.name}</ObjName>
                                        <EditChip viewBox="0 0 12 12">
                                            <rect width={12} height={12} rx={2} fill="#565656" />
                                            <path d="M3.500 9L8.500 3" stroke="#2a2a2a" strokeWidth={1.500} />
                                        </EditChip>
                                        <VisDots />
                                        <CheckSlot>
                                            {o.check && (
                                                <svg viewBox="0 0 14 14" fill="none" stroke="#4ad46a" strokeWidth={1.800}>
                                                    <path d="M1.500 7.500L5.500 11.500L12.500 3" />
                                                </svg>
                                            )}
                                            {o.focus && (
                                                <svg viewBox="0 0 14 14" fill="none" stroke="#f0f0f0" strokeWidth={2}>
                                                    <path d="M1.500 5V1.500H5M9 1.500h3.500V5M12.500 9v3.500H9M5 12.500H1.500V9" />
                                                    <circle cx={7} cy={7} r={1.800} fill="#f0f0f0" stroke="none" />
                                                </svg>
                                            )}
                                        </CheckSlot>
                                    </NameCell>
                                    <TagCell>
                                        {o.tags === 'camera' && (
                                            <>
                                                <TagIcon viewBox="0 0 18 18" fill="none" stroke="#bcbcbc" strokeWidth={1.800}>
                                                    <circle cx={9} cy={9} r={6.200} />
                                                    <path d="M4.500 4.500l9 9" />
                                                </TagIcon>
                                                <TagIcon viewBox="0 0 18 18" fill="none" stroke="#8284ec" strokeWidth={1.600}>
                                                    <circle cx={9} cy={9} r={6.200} />
                                                    <circle cx={9} cy={9} r={1.800} fill="#8284ec" stroke="none" />
                                                </TagIcon>
                                            </>
                                        )}
                                        {o.tags === 'bg' && (
                                            <>
                                                <TagIcon $framed viewBox="0 0 18 18">
                                                    <rect x={2.500} y={3.500} width={13} height={11} fill="#c4c4c4" />
                                                    <path d="M5 3.500V6M8 3.500V6M11 3.500V6M14 3.500V6" stroke="#444" strokeWidth={1} />
                                                </TagIcon>
                                                <TagIcon viewBox="0 0 18 18" fill="none">
                                                    <path d="M4 15V3.500H15" stroke="#8a8cff" strokeWidth={1.400} />
                                                    <path d="M6 5.500h8L6 13z" fill="#c8c8c8" />
                                                </TagIcon>
                                                <TagIcon viewBox="0 0 18 18">
                                                    <rect x={2.500} y={2.500} width={13} height={13} fill="#c8c8c8" />
                                                    <rect x={2.500} y={2.500} width={6.500} height={6.500} fill="#222" />
                                                    <rect x={9} y={9} width={6.500} height={6.500} fill="#222" />
                                                </TagIcon>
                                                <TagIcon viewBox="0 0 18 18">
                                                    <rect width={18} height={18} fill="#505050" />
                                                    <circle cx={9} cy={9} r={8} fill="#8a8cae" />
                                                    <circle cx={7} cy={6.500} r={3.500} fill="#b4b6d2" />
                                                </TagIcon>
                                            </>
                                        )}
                                    </TagCell>
                                </Row>
                            ))}
                        </ObjectList>
                    </ObjectPanel>
                    <AttrPanel>
                        <TabBar>
                            <Tab $on>属性</Tab>
                            <Tab>层</Tab>
                        </TabBar>
                        <PanelMenu>
                            <Burger />
                            <span>模式</span>
                            <span>编辑</span>
                            <span>用户数据</span>
                            <MenuIcons>
                                <MenuIcon $dim><Svg box={20}><path d="M17 10H4M9 4l-6 6 6 6" strokeWidth={1.700} /></Svg></MenuIcon>
                                <MenuIcon $dim><Svg box={20}><path d="M3 10h13M11 4l6 6-6 6" strokeWidth={1.700} /></Svg></MenuIcon>
                                <MenuIcon $dim><Svg box={20}><path d="M10 17V4M4 9l6-6 6 6" strokeWidth={1.700} /></Svg></MenuIcon>
                                <MenuIcon>{searchIcon}</MenuIcon>
                                <MenuIcon>{filterIcon}</MenuIcon>
                                <MenuIcon><Svg box={20}><rect x={4} y={9} width={12} height={8.500} rx={1.500} strokeWidth={1.700} /><path d="M6.500 9V6.500a3.500 3.500 0 0 1 7 0V9" strokeWidth={1.700} /></Svg></MenuIcon>
                                <MenuIcon><Svg box={20}><circle cx={10} cy={10} r={7.500} strokeWidth={1.500} /><circle cx={10} cy={10} r={2.500} strokeWidth={1.500} /></Svg></MenuIcon>
                                <MenuIcon>{externalIcon}</MenuIcon>
                            </MenuIcons>
                        </PanelMenu>
                        <AttrHead>
                            <DocIcon viewBox="0 0 16 18">
                                <path d="M2 1h9l3 3v13H2z" fill="#c8c8c8" />
                                <circle cx={8} cy={10} r={3} fill="none" stroke="#333" strokeWidth={2} />
                            </DocIcon>
                            <AttrTitle>工程</AttrTitle>
                            <PresetSelect>自定义</PresetSelect>
                        </AttrHead>
                        <PillRow $top={2}>
                            <Pill $w={40} $on>工程</Pill>
                            <Pill $w={40}>信息</Pill>
                            <Pill $w={67}>Cineware</Pill>
                            <Pill $w={62}><BellIcon />XRefs</Pill>
                            <Pill $w={55}><BellIcon />动画</Pill>
                            <Pill $w={55}><BellIcon />子弹</Pill>
                            <Pill $w={55} $hot><BellIcon color="#d9e08c" />模拟</Pill>
                        </PillRow>
                        <PillRow $top={4}>
                            <Pill $w={77}><BellIcon />待办事项</Pill>
                            <Pill $w={55}><BellIcon />节点</Pill>
                        </PillRow>
                        <AttrHeading>工程</AttrHeading>
                        <Section>
                            <SectionHead><ChevronIcon />比例</SectionHead>
                        </Section>
                        <Section>
                            <SectionHead><ChevronIcon open />时间</SectionHead>
                            <FieldGrid>
                                <FieldLabel>帧率</FieldLabel>
                                <FieldValue>30</FieldValue>
                                <FieldLabel $second>工程时长</FieldLabel>
                                <FieldValue>0 F</FieldValue>
                                <FieldLabel>最小时长</FieldLabel>
                                <FieldValue>0 F</FieldValue>
                                <FieldLabel $second>最大时长</FieldLabel>
                                <FieldValue>90 F</FieldValue>
                                <FieldLabel>预览最小</FieldLabel>
                                <FieldValue>0 F</FieldValue>
                                <FieldLabel $second>预览最大</FieldLabel>
                                <FieldValue>90 F</FieldValue>
                            </FieldGrid>
                        </Section>
                        <Section><SectionHead><ChevronIcon />执行</SectionHead></Section>
                        <Section><SectionHead><ChevronIcon />资产浏览器</SectionHead></Section>
                        <Section><SectionHead><ChevronIcon />显示</SectionHead></Section>
                        <Section><SectionHead><ChevronIcon />色彩管理</SectionHead></Section>
                    </AttrPanel>
                </Side>
            </Body>
            <StatusBar />
        </Page>
    );
}
